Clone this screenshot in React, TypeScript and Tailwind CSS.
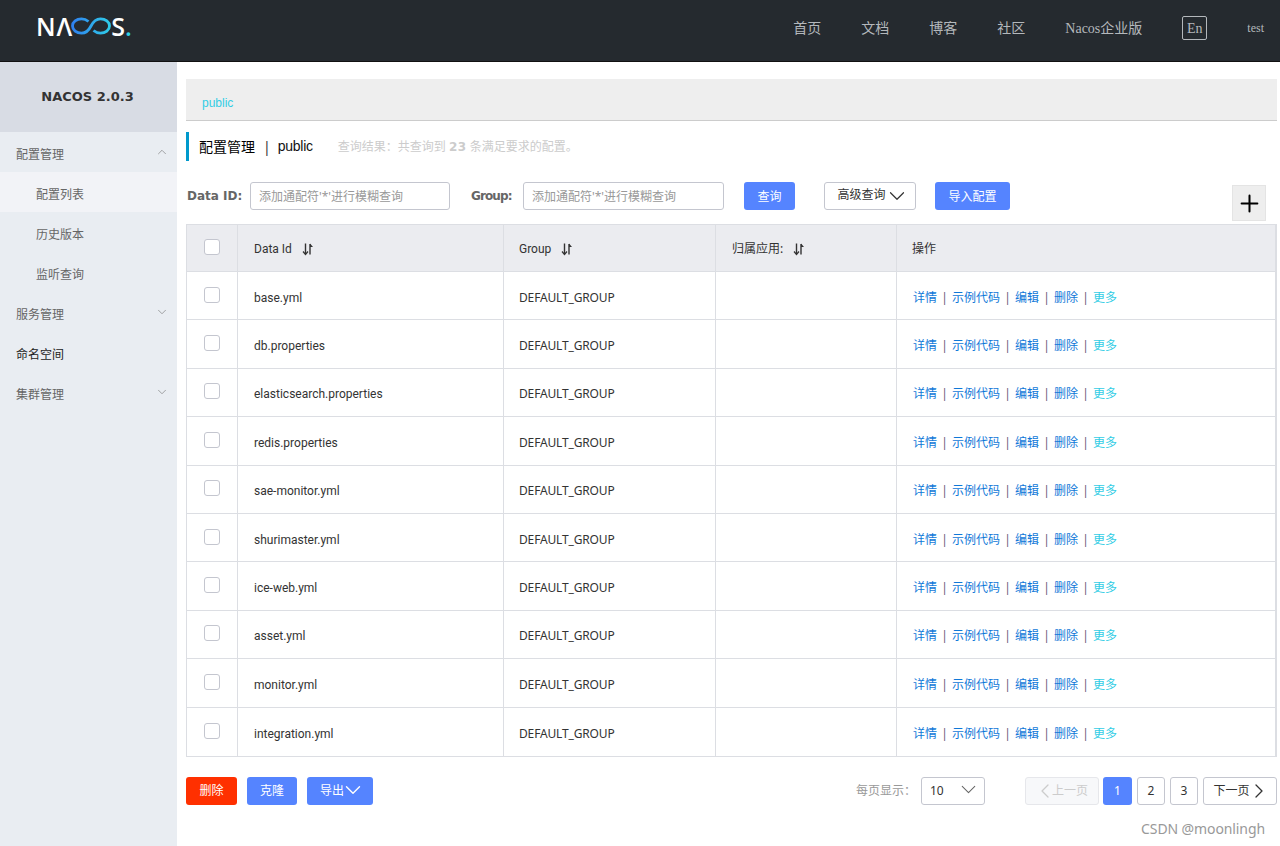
import { ChevronDown, ChevronLeft, ChevronRight, ChevronUp, Plus } from 'lucide-react';

const sans = 'font-["Noto_Sans","Noto_Sans_CJK_SC",sans-serif]';

const rows = [
  'base.yml',
  'db.properties',
  'elasticsearch.properties',
  'redis.properties',
  'sae-monitor.yml',
  'shurimaster.yml',
  'ice-web.yml',
  'asset.yml',
  'monitor.yml',
  'integration.yml',
];

const SortIcon = () => (
  <svg width="12" height="14" viewBox="0 0 12 14" fill="none" className="ml-[10px] shrink-0">
    <path d="M3.5 1.5V12" stroke="#333" strokeWidth="1.4" />
    <path d="M1 9.5L3.5 12.5L6 9.5" stroke="#333" strokeWidth="1.2" />
    <path d="M8 12.5V2" stroke="#333" strokeWidth="1.4" />
    <path d="M8 1.5L11 5H8Z" fill="#333" />
  </svg>
);

const Checkbox = ({ className = '' }: { className?: string }) => (
  <span className={`block w-4 h-4 rounded-[3px] border border-[#c4c6cf] bg-white ${className}`} />
);

const Logo = () => (
  <div className='flex items-center h-[18px] text-white font-["Open_Sans",sans-serif] font-semibold text-[25px] leading-none'>
    <span>N</span>
    <span className="ml-px">Λ</span>
    <svg width="42" height="18" viewBox="0 0 42 18" fill="none" className="-ml-[2px] shrink-0">
      <defs>
        <linearGradient id="loop" x1="0" y1="0" x2="42" y2="0" gradientUnits="userSpaceOnUse">
          <stop offset="0" stopColor="#2f7df0" />
          <stop offset="1" stopColor="#2fd0e8" />
        </linearGradient>
      </defs>
      <path
        d="M18.5 4.5C16.5 2.8 14.3 1.8 11.5 1.8C6.5 1.8 2.5 5 2.5 9C2.5 13 6.5 16.2 11.5 16.2C16.5 16.2 19.5 12 21 9C22.5 6 25.5 1.8 30.5 1.8C35.5 1.8 39.5 5 39.5 9C39.5 13 35.5 16.2 30.5 16.2C27.7 16.2 25.5 15.2 23.5 13.5"
        stroke="url(#loop)"
        strokeWidth="2.8"
      />
    </svg>
    <span className="-ml-px">S</span>
    <span className="text-[#2fd0e8]">.</span>
  </div>
);

const Header = () => (
  <header className="h-[62px] shrink-0 bg-[#252a2f] border-b border-[#111] flex items-center justify-between pl-[36px] pr-[16px]">
    <div className="-mt-[9px]">
      <Logo />
    </div>
    <nav className='flex items-center text-[14px] text-[#b4b8bc] font-["Liberation_Serif","Noto_Sans_CJK_SC",serif] -mt-[5px]'>
      <a className="mr-[40px]">首页</a>
      <a className="mr-[40px]">文档</a>
      <a className="mr-[40px]">博客</a>
      <a className="mr-[40px]">社区</a>
      <a className="mr-[40px]">Nacos企业版</a>
      <span className="w-[25px] h-[24px] border border-[#b4b8bc] rounded-[2px] flex items-center justify-center mr-[40px]">En</span>
      <span className="text-[12px]">test</span>
    </nav>
  </header>
);

const NavItem = ({ label, sub, active, icon, strong }: { label: string; sub?: boolean; active?: boolean; icon?: 'up' | 'down'; strong?: boolean }) => (
  <div
    className={`h-[40px] flex items-center justify-between text-[12px] pr-[8px] ${sub ? 'pl-[36px]' : 'pl-[16px]'} ${active ? 'bg-[#f2f3f7]' : ''} ${strong ? 'text-[#222]' : 'text-[#666]'}`}
  >
    <span className="mt-[5px]">{label}</span>
    {icon === 'up' && <ChevronUp size={14} strokeWidth={1.1} className="text-[#777] -mt-[1px]" />}
    {icon === 'down' && <ChevronDown size={14} strokeWidth={1.1} className="text-[#777] -mt-[1px]" />}
  </div>
);

const Sidebar = () => (
  <aside className="w-[177px] shrink-0 bg-[#e9edf2]">
    <div className='h-[70px] bg-[#d8dce4] flex items-center justify-center pr-[2px] text-[#333] text-[13px] font-bold font-["DejaVu_Sans",sans-serif]'>
      NACOS 2.0.3
    </div>
    <NavItem label="配置管理" icon="up" />
    <NavItem label="配置列表" sub active />
    <NavItem label="历史版本" sub />
    <NavItem label="监听查询" sub />
    <NavItem label="服务管理" icon="down" />
    <NavItem label="命名空间" strong />
    <NavItem label="集群管理" icon="down" />
  </aside>
);

const Input = ({ className = '' }: { className?: string }) => (
  <div className={`h-[28px] border border-[#c4c6cf] rounded-[3px] bg-white flex items-center pl-2 pt-[2px] text-[12px] text-[#999] ${className}`}>
    添加通配符'*'进行模糊查询
  </div>
);

const Filters = () => (
  <div className="flex h-[28px] mt-[21px] items-start">
    <label className='w-[64px] h-[28px] flex items-center pl-px text-[12px] font-bold text-[#666] font-["DejaVu_Sans",sans-serif]'>Data ID:</label>
    <Input className="w-[200px]" />
    <label className='ml-[21px] w-[52px] h-[28px] flex items-center text-[12px] font-bold -tracking-[0.9px] text-[#666] font-["DejaVu_Sans",sans-serif]'>Group:</label>
    <Input className="w-[201px]" />
    <button className="ml-[20px] w-[51px] h-[28px] pt-[2px] rounded-[3px] bg-[#5584ff] text-white text-[12px]">查询</button>
    <button className="ml-[29px] w-[92px] h-[28px] pl-[3px] rounded-[3px] border border-[#c4c6cf] bg-white text-[#333] text-[12px] flex items-center justify-center">
      <span className="-mt-[3px]">高级查询</span>
      <ChevronDown size={26} strokeWidth={1.1} className="-ml-[2px] -mr-[4px] -my-1 -mt-[5px]" />
    </button>
    <button className="ml-[19px] w-[75px] h-[28px] pt-[2px] rounded-[3px] bg-[#5584ff] text-white text-[12px]">导入配置</button>
    <button className="ml-[222px] mt-[3px] w-[34px] h-[36px] shrink-0 bg-[#eee] border border-[#e4e4e4] flex items-center justify-center">
      <Plus size={27} strokeWidth={1.8} className="text-black mt-px" />
    </button>
  </div>
);

const HeaderCell = ({ children, className = '' }: { children: React.ReactNode; className?: string }) => (
  <div className={`flex items-center border-r border-[#dcdee3] text-[12px] text-[#333] ${className}`}>{children}</div>
);

const Sep = () => <span className="w-[15px] text-center text-[#6b5b7b]">|</span>;

const ConfigTable = () => (
  <div className='mt-[14px] border border-[#dcdee3] border-r-2 font-["Noto_Sans","Noto_Sans_CJK_SC",sans-serif]'>
    <div className="grid grid-cols-[51px_266px_212px_181px_1fr] h-[47px] bg-[#ebecf0] border-b border-[#dcdee3]">
      <HeaderCell className="justify-center"><Checkbox className="-mt-[3px]" /></HeaderCell>
      <HeaderCell className='pl-4 pt-[2px] font-["Roboto","Noto_Sans_CJK_SC",sans-serif]'>Data Id<SortIcon /></HeaderCell>
      <HeaderCell className='pl-[15px] pt-[2px] font-["Roboto","Noto_Sans_CJK_SC",sans-serif]'>Group<SortIcon /></HeaderCell>
      <HeaderCell className="pl-4 pt-[2px]">归属应用:<SortIcon /></HeaderCell>
      <HeaderCell className="pl-[15px] pt-[2px] border-r-0">操作</HeaderCell>
    </div>
    {rows.map((name, i) => (
      <div
        key={name}
        className={`grid grid-cols-[51px_266px_212px_181px_1fr] h-[48.4px] text-[12px] text-[#333] ${i < rows.length - 1 ? 'border-b border-[#dcdee3]' : ''}`}
      >
        <div className="flex items-center justify-center border-r border-[#dcdee3]"><Checkbox className="-mt-[2px]" /></div>
        <div className='flex items-center pl-4 pt-1 border-r border-[#dcdee3] font-["Roboto",sans-serif]'>{name}</div>
        <div className="flex items-center pl-[15px] pt-1 border-r border-[#dcdee3] -tracking-[0.15px]">DEFAULT_GROUP</div>
        <div className="border-r border-[#dcdee3]" />
        <div className="flex items-center pl-4 pt-1 text-[#0f78d8]">
          <a>详情</a>
          <Sep />
          <a>示例代码</a>
          <Sep />
          <a>编辑</a>
          <Sep />
          <a>删除</a>
          <Sep />
          <a className="text-[#33cde5]">更多</a>
        </div>
      </div>
    ))}
  </div>
);

const Footer = () => (
  <div className="flex items-center h-[28px] mt-[20px] text-[12px]">
    <button className="w-[51px] h-[28px] pt-px rounded-[3px] bg-[#ff3000] text-white">删除</button>
    <button className="ml-[10px] w-[50px] h-[28px] pt-px rounded-[3px] bg-[#5584ff] text-white">克隆</button>
    <button className="ml-[10px] w-[66px] h-[28px] pl-[13px] rounded-[3px] bg-[#5584ff] text-white flex items-center">
      <span className="pt-px">导出</span>
      <ChevronDown size={26} strokeWidth={1.3} className="-ml-[4px] -mt-[5px] -mb-1" />
    </button>
    <div className="ml-auto flex items-center">
      <span className="w-[55px] mr-[10px] whitespace-nowrap text-[#999]">每页显示：</span>
      <div className="w-[64px] h-[28px] border border-[#c4c6cf] rounded-[3px] flex items-center justify-between pl-2 pr-[3px] text-[#333]">
        10
        <ChevronDown size={25} strokeWidth={1} className="text-[#666] -mt-[3px]" />
      </div>
      <div className="ml-[40px] w-[74px] h-[28px] pl-[3px] border border-[#e6e7eb] bg-[#f7f8fa] rounded-[3px] flex items-center justify-center text-[#ccc]">
        <ChevronLeft size={24} strokeWidth={1.3} className="-ml-[6px] -mr-[5px]" />
        上一页
      </div>
      <div className="ml-[4px] w-[29px] h-[28px] rounded-[3px] bg-[#5584ff] text-white flex items-center justify-center">1</div>
      <div className="ml-[5px] w-[28px] h-[28px] rounded-[3px] border border-[#c4c6cf] text-[#333] flex items-center justify-center">2</div>
      <div className="ml-[5px] w-[28px] h-[28px] rounded-[3px] border border-[#c4c6cf] text-[#333] flex items-center justify-center">3</div>
      <div className="ml-[5px] w-[74px] h-[28px] pr-[2px] rounded-[3px] border border-[#c4c6cf] text-[#333] flex items-center justify-center">
        下一页
        <ChevronRight size={24} strokeWidth={1.3} className="-ml-[3px] -mr-[6px]" />
      </div>
    </div>
  </div>
);

export default function App() {
  return (
    <div className={`relative h-[846px] flex flex-col overflow-hidden bg-white ${sans}`}>
      <Header />
      <div className="flex flex-1 min-h-0">
        <Sidebar />
        <main className="flex-1 pl-[9px] pr-[3px] pt-[17px]">
          <div className='h-[42px] bg-[#eee] border-b border-[#ccc] flex items-center pl-4 pt-[7px] text-[12px] text-[#33cde5] font-["Liberation_Sans",sans-serif]'>public</div>
          <div className="mt-[11px] h-[29px] border-l-[3px] border-[#09c] pl-[10px] flex items-center">
            <span className="text-[14px] text-black">配置管理</span>
            <span className="ml-2 mr-[7px] text-[14px] text-[#333]">|</span>
            <span className='text-[14px] text-[#111] -tracking-[0.25px] font-["Liberation_Sans",sans-serif]'>public</span>
            <span className="ml-[25px] text-[12px] text-[#ccc]">
              查询结果：共查询到 <strong className='font-["DejaVu_Sans",sans-serif] tracking-[0.5px]'>23</strong> 条满足要求的配置。
            </span>
          </div>
          <Filters />
          <ConfigTable />
          <Footer />
        </main>
      </div>
      <span className="absolute right-[15px] bottom-[10px] text-[14px] text-[#999] leading-none -tracking-[0.1px]">CSDN @moonlingh</span>
    </div>
  );
}
